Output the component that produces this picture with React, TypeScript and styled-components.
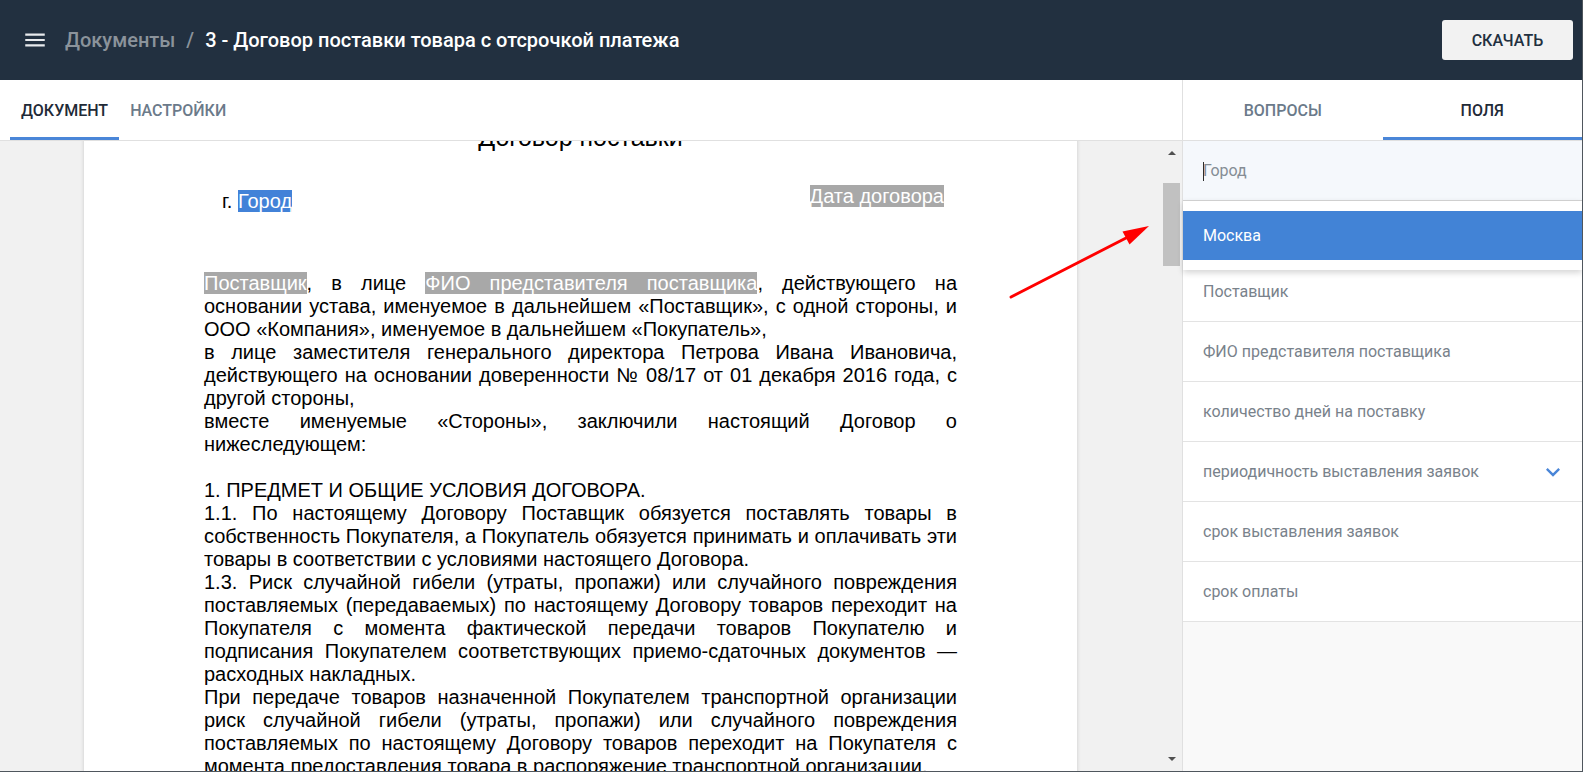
import React, { useLayoutEffect, useRef } from "react";
import styled, { createGlobalStyle } from "styled-components";

const GlobalStyle = createGlobalStyle`
  html, body { margin: 0; padding: 0; }
  body {
    font-family: Roboto, "Noto Sans", sans-serif;
    background: #fff;
    overflow: hidden;
  }
  *, *::before, *::after { box-sizing: border-box; }
`;

const Root = styled.div`
  position: relative;
  width: 1583px;
  height: 772px;
  display: flex;
  flex-direction: column;
  border-right: 1px solid #4f565d;
  border-bottom: 1px solid #4f565d;
  overflow: hidden;
`;

/* ---------- header ---------- */
const Header = styled.header`
  height: 80px;
  flex: none;
  background: #223040;
  display: flex;
  align-items: center;
  padding: 0 9px 0 22px;
`;

const MenuButton = styled.button`
  border: 0;
  background: none;
  padding: 0;
  width: 26px;
  height: 26px;
  color: #e8eaed;
  display: flex;
  margin-right: 17px;
  cursor: pointer;
`;

const Crumb = styled.span<{ $current?: boolean }>`
  font-size: 20px;
  font-weight: 500;
  white-space: nowrap;
  color: ${(p) => (p.$current ? "#ffffff" : "#8b939b")};
`;

const CrumbSep = styled.span`
  font-size: 20px;
  font-weight: 500;
  color: #8b939b;
  padding: 0 11px;
`;

const Spacer = styled.div`
  flex: 1;
`;

const DownloadButton = styled.button`
  width: 131px;
  height: 40px;
  border: 0;
  border-radius: 3px;
  background: #f2f2f2;
  color: #223040;
  font-family: Roboto, sans-serif;
  font-size: 16px;
  font-weight: 500;
  text-transform: uppercase;
  cursor: pointer;
`;

/* ---------- body ---------- */
const Body = styled.div`
  flex: 1;
  min-height: 0;
  display: flex;
`;

const DocColumn = styled.section`
  width: 1183px;
  flex: none;
  display: flex;
  flex-direction: column;
  border-right: 1px solid #e0e0e0;
`;

const TabBar = styled.nav<{ $inset?: boolean }>`
  height: 61px;
  flex: none;
  display: flex;
  align-items: stretch;
  padding-left: ${(p) => (p.$inset ? "10px" : "0")};
  border-bottom: 1px solid #e0e0e0;
  background: #fff;
`;

const Tab = styled.button<{ $active?: boolean; $grow?: boolean }>`
  border: 0;
  background: none;
  padding: 0 11px;
  font-family: Roboto, sans-serif;
  font-size: 16px;
  font-weight: 500;
  text-transform: uppercase;
  color: ${(p) => (p.$active ? "#1f2a37" : "#6b7a8a")};
  flex: ${(p) => (p.$grow ? "1" : "none")};
  display: flex;
  align-items: center;
  justify-content: center;
  box-shadow: ${(p) => (p.$active ? "inset 0 -3px 0 #4a86d8" : "none")};
  cursor: pointer;
`;

const DocArea = styled.div`
  flex: 1;
  min-height: 0;
  display: flex;
`;

const Viewport = styled.div`
  flex: 1;
  overflow-y: scroll;
  background: #f1f1f1;
  scrollbar-width: none;
  &::-webkit-scrollbar {
    display: none;
  }
`;

const Page = styled.article`
  width: 993px;
  margin: 0 auto;
  background: #fff;
  box-shadow: 0 0 4px rgba(0, 0, 0, 0.16);
  padding: 40px 120px 80px;
  font-family: "Liberation Sans", Arial, sans-serif;
  color: #000;
  font-size: 20px;
  line-height: 23px;
`;

const DocTitle = styled.h1`
  margin: 0 0 33px;
  text-align: center;
  font-weight: 400;
  font-size: 25px;
  line-height: 29px;
`;

const PlaceRow = styled.div`
  display: flex;
  justify-content: space-between;
  align-items: flex-start;
  padding: 0 13px 0 18px;
  margin-bottom: 59px;
`;

const PlaceCell = styled.div<{ $drop?: boolean }>`
  padding-top: ${(p) => (p.$drop ? "5px" : "0")};
`;

const Mark = styled.span<{ $tone: "blue" | "gray" }>`
  background: ${(p) => (p.$tone === "blue" ? "#4282d8" : "#a8a8a8")};
  color: #fff;
`;

const Line = styled.div<{ $last?: boolean; $gap?: boolean }>`
  text-align: justify;
  text-align-last: ${(p) => (p.$last ? "left" : "justify")};
  margin-top: ${(p) => (p.$gap ? "23px" : "0")};
`;

const ScrollRail = styled.div`
  width: 21px;
  flex: none;
  background: #f1f1f1;
  display: flex;
  flex-direction: column;
`;

const RailArrow = styled.span<{ $dir: "up" | "down" }>`
  height: 24px;
  flex: none;
  display: flex;
  align-items: center;
  justify-content: center;
  &::before {
    content: "";
    border-left: 4px solid transparent;
    border-right: 4px solid transparent;
    ${(p) =>
      p.$dir === "up"
        ? "border-bottom: 4px solid #505050;"
        : "border-top: 4px solid #505050;"}
  }
`;

const RailTrack = styled.div`
  flex: 1;
  padding: 0 2px;
`;

const RailThumb = styled.div`
  height: 83px;
  background: #c1c1c1;
`;

/* ---------- side panel ---------- */
const SidePanel = styled.aside`
  flex: 1;
  min-width: 0;
  display: flex;
  flex-direction: column;
  background: #f9f9f9;
`;

const FieldList = styled.div`
  display: flex;
  flex-direction: column;
  background: #fff;
`;

const ActiveField = styled.div`
  position: relative;
  height: 121px;
  flex: none;
  background: #fff;
`;

const FieldInput = styled.input`
  display: block;
  width: 100%;
  height: 60px;
  border: 0;
  border-bottom: 1px solid #d8d8d8;
  background: #f5f8fc;
  padding: 0 20px;
  font-family: Roboto, sans-serif;
  font-size: 16px;
  color: #333;
  outline: none;
  caret-color: transparent;
  &::placeholder {
    color: #858d95;
  }
`;

const Caret = styled.span`
  position: absolute;
  left: 20px;
  top: 21px;
  width: 1px;
  height: 19px;
  background: #2b2b2b;
`;

const Suggestions = styled.ul`
  position: absolute;
  top: 59px;
  left: 0;
  right: 0;
  margin: 0;
  padding: 10px 0;
  list-style: none;
  background: #fff;
  border-top: 1px solid #cfcfcf;
  box-shadow: 0 3px 6px rgba(0, 0, 0, 0.16);
  z-index: 2;
`;

const Suggestion = styled.li<{ $active?: boolean }>`
  height: 49px;
  display: flex;
  align-items: center;
  padding: 0 20px;
  font-size: 16px;
  color: ${(p) => (p.$active ? "#fff" : "#333")};
  background: ${(p) => (p.$active ? "#4283d6" : "transparent")};
`;

const FieldRow = styled.div`
  height: 60px;
  display: flex;
  align-items: center;
  justify-content: space-between;
  padding: 0 15px 0 20px;
  border-bottom: 1px solid #e3e3e3;
  font-size: 16px;
  color: #79828b;
`;

const Chevron = styled.svg`
  width: 28px;
  height: 28px;
  fill: #4a86d8;
`;

const Annotation = styled.svg`
  position: absolute;
  left: 1000px;
  top: 215px;
  width: 160px;
  height: 90px;
  pointer-events: none;
  z-index: 5;
`;

const fields = [
  { label: "Поставщик" },
  { label: "ФИО представителя поставщика" },
  { label: "количество дней на поставку" },
  { label: "периодичность выставления заявок", expandable: true },
  { label: "срок выставления заявок" },
  { label: "срок оплаты" },
];

export default function App() {
  const viewportRef = useRef<HTMLDivElement>(null);

  useLayoutEffect(() => {
    if (viewportRef.current) viewportRef.current.scrollTop = 58;
  }, []);

  return (
    <Root>
      <GlobalStyle />
      <Header>
        <MenuButton aria-label="Меню">
          <svg width="26" height="26" viewBox="0 0 24 24" fill="currentColor">
            <path d="M3 18h18v-2H3v2zm0-5h18v-2H3v2zm0-7v2h18V6H3z" />
          </svg>
        </MenuButton>
        <Crumb>Документы</Crumb>
        <CrumbSep>/</CrumbSep>
        <Crumb $current>3 - Договор поставки товара с отсрочкой платежа</Crumb>
        <Spacer />
        <DownloadButton>Скачать</DownloadButton>
      </Header>

      <Body>
        <DocColumn>
          <TabBar $inset>
            <Tab $active>Документ</Tab>
            <Tab>Настройки</Tab>
          </TabBar>
          <DocArea>
            <Viewport ref={viewportRef}>
              <Page>
                <DocTitle>Договор поставки</DocTitle>
                <PlaceRow>
                  <PlaceCell $drop>
                    г. <Mark $tone="blue">Город</Mark>
                  </PlaceCell>
                  <PlaceCell>
                    <Mark $tone="gray">Дата договора</Mark>
                  </PlaceCell>
                </PlaceRow>

                <Line>
                  <Mark $tone="gray">Поставщик</Mark>, в лице{" "}
                  <Mark $tone="gray">ФИО представителя поставщика</Mark>, действующего на
                </Line>
                <Line>основании устава, именуемое в дальнейшем «Поставщик», с одной стороны, и</Line>
                <Line $last>ООО «Компания», именуемое в дальнейшем «Покупатель»,</Line>
                <Line>в лице заместителя генерального директора Петрова Ивана Ивановича,</Line>
                <Line>действующего на основании доверенности № 08/17 от 01 декабря 2016 года, с</Line>
                <Line $last>другой стороны,</Line>
                <Line>вместе именуемые «Стороны», заключили настоящий Договор о</Line>
                <Line $last>нижеследующем:</Line>

                <Line $last $gap>1. ПРЕДМЕТ И ОБЩИЕ УСЛОВИЯ ДОГОВОРА.</Line>
                <Line>1.1. По настоящему Договору Поставщик обязуется поставлять товары в</Line>
                <Line>собственность Покупателя, а Покупатель обязуется принимать и оплачивать эти</Line>
                <Line $last>товары в соответствии с условиями настоящего Договора.</Line>
                <Line>1.3. Риск случайной гибели (утраты, пропажи) или случайного повреждения</Line>
                <Line>поставляемых (передаваемых) по настоящему Договору товаров переходит на</Line>
                <Line>Покупателя с момента фактической передачи товаров Покупателю и</Line>
                <Line>подписания Покупателем соответствующих приемо-сдаточных документов —</Line>
                <Line $last>расходных накладных.</Line>
                <Line>При передаче товаров назначенной Покупателем транспортной организации</Line>
                <Line>риск случайной гибели (утраты, пропажи) или случайного повреждения</Line>
                <Line>поставляемых по настоящему Договору товаров переходит на Покупателя с</Line>
                <Line $last>момента предоставления товара в распоряжение транспортной организации.</Line>
              </Page>
            </Viewport>
            <ScrollRail>
              <RailArrow $dir="up" />
              <RailTrack>
                <RailThumb style={{ marginTop: 18 }} />
              </RailTrack>
              <RailArrow $dir="down" />
            </ScrollRail>
          </DocArea>
        </DocColumn>

        <SidePanel>
          <TabBar>
            <Tab $grow>Вопросы</Tab>
            <Tab $grow $active>Поля</Tab>
          </TabBar>
          <FieldList>
            <ActiveField>
              <FieldInput placeholder="Город" readOnly />
              <Caret />
              <Suggestions>
                <Suggestion $active>Москва</Suggestion>
              </Suggestions>
            </ActiveField>
            {fields.map((f) => (
              <FieldRow key={f.label}>
                <span>{f.label}</span>
                {f.expandable && (
                  <Chevron viewBox="0 0 24 24">
                    <path d="M16.59 8.59L12 13.17 7.41 8.59 6 10l6 6 6-6z" />
                  </Chevron>
                )}
              </FieldRow>
            ))}
          </FieldList>
        </SidePanel>
      </Body>

      <Annotation viewBox="1000 215 160 90">
        <line x1="1011" y1="297" x2="1127" y2="237.5" stroke="#ff0000" strokeWidth="3" strokeLinecap="round" />
        <polygon points="1149,226 1122.5,231.5 1129.5,244.5" fill="#ff0000" />
      </Annotation>
    </Root>
  );
}
